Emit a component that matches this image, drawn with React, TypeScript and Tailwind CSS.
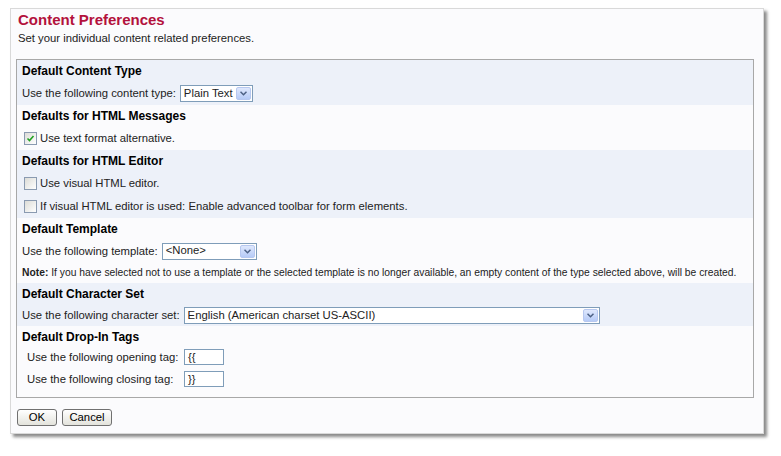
import React from 'react';

const font = { fontFamily: '"Liberation Sans", Arial, sans-serif' };

function Check({ checked }: { checked?: boolean }) {
  return (
    <span className="inline-flex h-[13px] w-[13px] items-center justify-center border border-[#8a9ab0] bg-gradient-to-br from-[#dcdcd7] to-[#ffffff] shrink-0">
      {checked && (
        <svg width="9" height="9" viewBox="0 0 9 9">
          <path d="M1.5 4.5 L3.5 6.5 L7.5 2" fill="none" stroke="#21a121" strokeWidth="1.6" />
        </svg>
      )}
    </span>
  );
}

function Select({ value, width }: { value: string; width: string }) {
  return (
    <span className={`inline-flex h-[17px] items-center border border-[#7f9db9] bg-white ${width}`}>
      <span className="flex-1 pl-[3px] leading-none">{value}</span>
      <span className="mr-[1px] flex h-[13px] w-[15px] items-center justify-center rounded-[2px] border border-[#b7c8f0] bg-gradient-to-b from-[#dfe8fd] to-[#b6cbf7]">
        <svg width="7" height="5" viewBox="0 0 7 5">
          <path d="M0.5 0.8 L3.5 3.8 L6.5 0.8" fill="none" stroke="#4d6185" strokeWidth="1.5" />
        </svg>
      </span>
    </span>
  );
}

function Header({ children }: { children: React.ReactNode }) {
  return <div className="h-[22px] pl-[5px] pt-[4px] font-bold text-[12px] leading-[14px] text-black">{children}</div>;
}

function Button({ children, width }: { children: React.ReactNode; width: string }) {
  return (
    <button className={`h-[17px] ${width} rounded-[3px] border border-[#707070] bg-gradient-to-b from-[#ffffff] to-[#e3e3dc] text-[11.3px] leading-none text-black`}>
      {children}
    </button>
  );
}

export default function App() {
  return (
    <div className="h-[456px] w-[781px] bg-white pl-[10px] pt-[8px] text-[11.3px] text-[#222]" style={font}>
      <div className="h-[426px] w-[754px] border border-[#d9d9d9] bg-[#fbfbfd] px-[5px] shadow-[3px_3px_3px_#8a8a8a]">
        <h1 className="ml-[2px] mt-[1px] text-[15px] font-bold leading-[20px] text-[#b3113c]">Content Preferences</h1>
        <p className="ml-[2px] mt-[1px] leading-[14px]">Set your individual content related preferences.</p>

        <div className="mt-[14px] w-[738px] border border-[#a8a8a8]">
          <div className="bg-[#edf1f9]">
            <Header>Default Content Type</Header>
            <div className="flex h-[23px] items-center pl-[5px]">
              <span>Use the following content type:</span>
              <span className="ml-[4px]"><Select value="Plain Text" width="w-[73px]" /></span>
            </div>
          </div>

          <div>
            <Header>Defaults for HTML Messages</Header>
            <div className="flex h-[23px] items-center pl-[7px]">
              <Check checked />
              <span className="ml-[3px]">Use text format alternative.</span>
            </div>
          </div>

          <div className="bg-[#edf1f9]">
            <Header>Defaults for HTML Editor</Header>
            <div className="flex h-[23px] items-center pl-[7px]">
              <Check />
              <span className="ml-[3px]">Use visual HTML editor.</span>
            </div>
            <div className="flex h-[23px] items-center pl-[7px]">
              <Check />
              <span className="ml-[3px]">If visual HTML editor is used: Enable advanced toolbar for form elements.</span>
            </div>
          </div>

          <div>
            <Header>Default Template</Header>
            <div className="flex h-[22px] items-center pl-[5px]">
              <span>Use the following template:</span>
              <span className="ml-[4px]"><Select value="<None>" width="w-[95px]" /></span>
            </div>
            <div className="flex h-[21px] items-center pl-[5px] text-[10.3px]">
              <span><b>Note:</b> If you have selected not to use a template or the selected template is no longer available, an empty content of the type selected above, will be created.</span>
            </div>
          </div>

          <div className="bg-[#edf1f9]">
            <Header>Default Character Set</Header>
            <div className="flex h-[21px] items-center pl-[5px]">
              <span>Use the following character set:</span>
              <span className="ml-[4px]"><Select value="English (American charset US-ASCII)" width="w-[416px]" /></span>
            </div>
          </div>

          <div className="pb-[9px]">
            <Header>Default Drop-In Tags</Header>
            <div className="mt-[1px] flex items-center pl-[10px]">
              <span className="w-[157px]">Use the following opening tag:</span>
              <span className="h-[16px] w-[40px] border border-[#7f9db9] bg-white pl-[3px] leading-[14px]">{'{{'}</span>
            </div>
            <div className="mt-[5px] flex items-center pl-[10px]">
              <span className="w-[157px]">Use the following closing tag:</span>
              <span className="h-[16px] w-[40px] border border-[#7f9db9] bg-white pl-[3px] leading-[14px]">{'}}'}</span>
            </div>
          </div>
        </div>

        <div className="mt-[11px] flex gap-[5px] pl-[1px]">
          <Button width="w-[40px]">OK</Button>
          <Button width="w-[50px]">Cancel</Button>
        </div>
      </div>
    </div>
  );
}
